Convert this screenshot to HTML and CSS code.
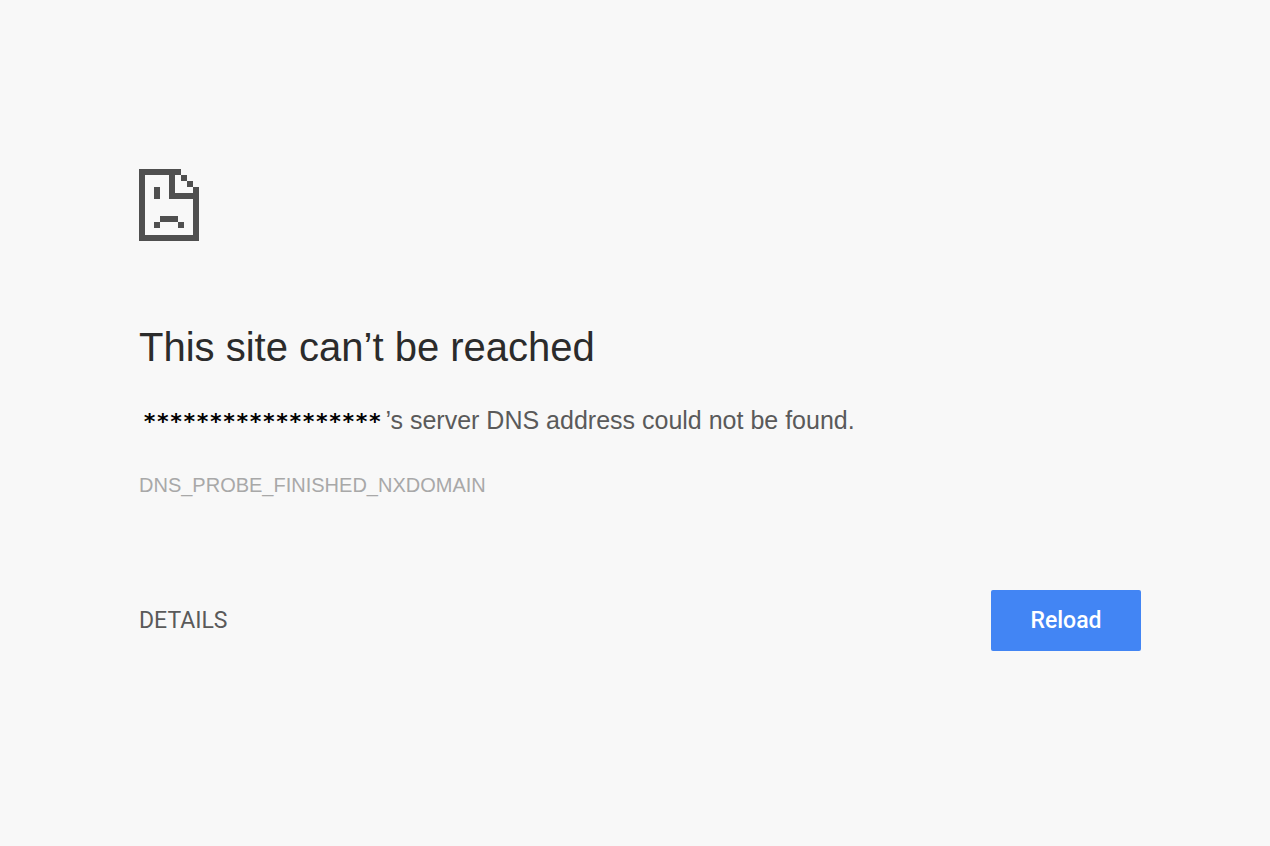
FILE: index.html
```html
<!DOCTYPE html>
<html lang="en">
<head>
    <meta charset="UTF-8">
    <meta name="viewport" content="width=device-width, initial-scale=1.0">
    <title>This site can’t be reached</title>
    <link rel="stylesheet" href="styles.css">
</head>
<body>
    <main class="container">
        <svg class="icon" viewBox="0 0 20 24" shape-rendering="crispEdges" aria-hidden="true">
            <path fill-rule="evenodd" d="M0 0H14V2H16V4H18V6H20V24H0ZM2 2V22H18V10H10V2ZM12 2V8H18V6H16V4H14V2Z"/>
            <path d="M5 6H7V10H5ZM7 15.5H13V17.5H7ZM5 17.5H7V19.5H5ZM13 17.5H15V19.5H13Z"/>
        </svg>
        <h1>This site can’t be reached</h1>
        <p class="message"><span class="host">******************</span>’s server DNS address could not be found.</p>
        <p class="error-code">DNS_PROBE_FINISHED_NXDOMAIN</p>
        <div class="buttons">
            <button type="button" class="btn-details">DETAILS</button>
            <button type="button" class="btn-reload">Reload</button>
        </div>
    </main>
</body>
</html>
```

FILE: styles.css
```css
body {
    margin: 0;
    background: #f8f8f8;
    color: #5a5a5a;
    font-family: "Liberation Sans", Arial, sans-serif;
}
.container {
    max-width: 1002px;
    margin: 0 auto;
    padding: 169px 40px 40px 50px;
}
.icon {
    display: block;
    width: 60px;
    height: 72px;
    fill: #4f4f4f;
}
h1 {
    margin: 81px 0 0;
    color: #2b2b2b;
    font-size: 40px;
    font-weight: 400;
    line-height: 50px;
}
.message {
    margin: 32px 0 0;
    font-size: 25px;
    line-height: 32px;
}
.host {
    margin: 0 4px;
    color: #000;
    font-family: "DejaVu Sans Mono", monospace;
    font-size: 22px;
    font-weight: 700;
}
.error-code {
    margin: 34px 0 0;
    color: #a8a8a8;
    font-size: 20px;
    line-height: 26px;
}
.buttons {
    display: flex;
    justify-content: space-between;
    align-items: center;
    margin-top: 92px;
}
button {
    border: none;
    cursor: pointer;
    font-family: Roboto, sans-serif;
    font-size: 23px;
}
.btn-details {
    padding: 0;
    background: none;
    color: #5a5a5a;
}
.btn-reload {
    min-width: 150px;
    height: 61px;
    border-radius: 2px;
    background: #4285f4;
    color: #fff;
    font-weight: 500;
}
```
